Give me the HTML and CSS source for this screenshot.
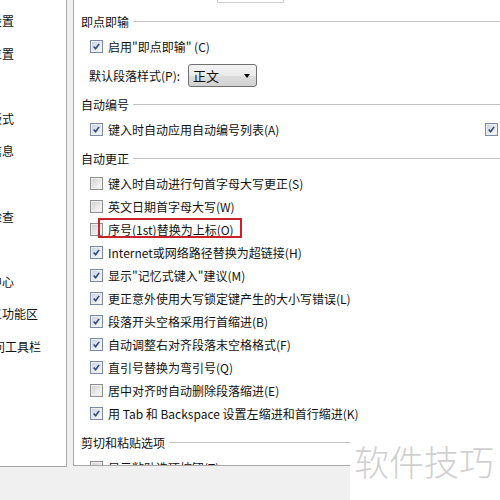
FILE: index.html
```html
<!DOCTYPE html>
<html lang="zh-CN">
<head>
  <meta charset="UTF-8" />
  <title>选项 - 编辑</title>
  <link rel="stylesheet" href="styles.css">
</head>
<body>
  <div class="window">
    <aside class="nav">
      <div class="nav-item">视图设置</div>
      <div class="nav-item">文件位置</div>
      <div class="nav-item">修订</div>
      <div class="nav-item">中文版式</div>
      <div class="nav-item">用户信息</div>
      <div class="nav-item">打印</div>
      <div class="nav-item">拼写检查</div>
      <div class="nav-item">安全</div>
      <div class="nav-item">信任中心</div>
      <div class="nav-item">自定义功能区</div>
      <div class="nav-item long">快速访问工具栏</div>
    </aside>

    <main class="panel">
      <div class="top-field"></div>

      <section class="group">
        <div class="group-title">即点即输</div>
        <label class="opt"><span class="cb on"><svg viewBox="0 0 13 13"><path d="M3.2 6.6 L5.4 9.2 L9.6 3.4"/></svg></span>启用"即点即输" (C)</label>
        <div class="opt select-row">
          默认段落样式(P):
          <div class="combo">正文<span class="arrow"></span></div>
        </div>
      </section>

      <section class="group">
        <div class="group-title">自动编号</div>
        <div class="opt-pair">
          <label class="opt"><span class="cb on"><svg viewBox="0 0 13 13"><path d="M3.2 6.6 L5.4 9.2 L9.6 3.4"/></svg></span>键入时自动应用自动编号列表(A)</label>
          <label class="opt"><span class="cb on"><svg viewBox="0 0 13 13"><path d="M3.2 6.6 L5.4 9.2 L9.6 3.4"/></svg></span>自动带圈编号(U)</label>
        </div>
      </section>

      <section class="group">
        <div class="group-title">自动更正</div>
        <label class="opt"><span class="cb"></span>键入时自动进行句首字母大写更正(S)</label>
        <label class="opt"><span class="cb"></span>英文日期首字母大写(W)</label>
        <label class="opt"><span class="cb"></span>序号(1st)替换为上标(O)<span class="highlight"></span></label>
        <label class="opt"><span class="cb on"><svg viewBox="0 0 13 13"><path d="M3.2 6.6 L5.4 9.2 L9.6 3.4"/></svg></span>Internet或网络路径替换为超链接(H)</label>
        <label class="opt"><span class="cb on"><svg viewBox="0 0 13 13"><path d="M3.2 6.6 L5.4 9.2 L9.6 3.4"/></svg></span>显示"记忆式键入"建议(M)</label>
        <label class="opt"><span class="cb on"><svg viewBox="0 0 13 13"><path d="M3.2 6.6 L5.4 9.2 L9.6 3.4"/></svg></span>更正意外使用大写锁定键产生的大小写错误(L)</label>
        <label class="opt"><span class="cb on"><svg viewBox="0 0 13 13"><path d="M3.2 6.6 L5.4 9.2 L9.6 3.4"/></svg></span>段落开头空格采用行首缩进(B)</label>
        <label class="opt"><span class="cb on"><svg viewBox="0 0 13 13"><path d="M3.2 6.6 L5.4 9.2 L9.6 3.4"/></svg></span>自动调整右对齐段落末空格格式(F)</label>
        <label class="opt"><span class="cb on"><svg viewBox="0 0 13 13"><path d="M3.2 6.6 L5.4 9.2 L9.6 3.4"/></svg></span>直引号替换为弯引号(Q)</label>
        <label class="opt"><span class="cb"></span>居中对齐时自动删除段落缩进(E)</label>
        <label class="opt"><span class="cb on"><svg viewBox="0 0 13 13"><path d="M3.2 6.6 L5.4 9.2 L9.6 3.4"/></svg></span>用 Tab 和 Backspace 设置左缩进和首行缩进(K)</label>
      </section>

      <section class="group">
        <div class="group-title">剪切和粘贴选项</div>
        <label class="opt"><span class="cb"></span>显示粘贴选项按钮(T)</label>
      </section>
    </main>

    <div class="watermark">软件技巧</div>
  </div>
</body>
</html>
```

FILE: styles.css
```css
body {
  margin: 0;
  background: #f0f0f0;
  font-family: "Noto Sans CJK SC", "Noto Sans", sans-serif;
  font-size: 12px;
  color: #111;
}

.window {
  position: relative;
  display: flex;
  gap: 6px;
  width: 500px;
  height: 500px;
  overflow: hidden;
}

/* left category list, scrolled so only the ends show */
.nav {
  flex: 0 0 67px;
  height: 467px;
  box-sizing: border-box;
  padding-top: 5px;
  background: #fff;
  border-right: 1px solid #a7a7a7;
  border-bottom: 1px solid #a7a7a7;
  overflow: hidden;
}

.nav-item {
  height: 32.6px;
  line-height: 32.6px;
  white-space: nowrap;
  text-indent: -34px;
}

.nav-item.long {
  text-indent: -43px;
}

.panel {
  flex: 1;
  height: 466px;
  box-sizing: border-box;
  padding-left: 7px;
  background: #fff;
  border-left: 1px solid #a7a7a7;
  border-bottom: 1px solid #a7a7a7;
  overflow: hidden;
}

.top-field {
  width: 65px;
  height: 2px;
  margin-left: 136px;
  border: 1px solid #cfcfcf;
  border-top: none;
}

.group {
  margin-bottom: 6px;
}

.group:first-of-type {
  margin-top: 7px;
}

.group-title {
  display: flex;
  align-items: center;
  height: 23px;
  margin-bottom: 2px;
  white-space: nowrap;
}

.group-title::after {
  content: "";
  flex: 1;
  height: 1px;
  margin-left: 4px;
  background: #c2c2c2;
}

.opt {
  position: relative;
  display: flex;
  align-items: center;
  gap: 5px;
  height: 23px;
  padding-left: 9px;
  white-space: nowrap;
}

.opt-pair {
  display: grid;
  grid-template-columns: 404px auto;
}

.opt-pair .opt + .opt {
  padding-left: 0;
}

.cb {
  flex: 0 0 auto;
  width: 11px;
  height: 11px;
  border: 1px solid #8e8f8f;
  background: linear-gradient(135deg, #cfcfcf, #f4f4f4 80%);
  box-shadow: inset 0 0 0 1px #eeeeee;
}

.cb.on {
  border-color: #7b8aa6;
  background: linear-gradient(135deg, #c9d0dd, #f2f4f8 80%);
}

.cb svg {
  display: block;
  width: 11px;
  height: 11px;
}

.cb svg path {
  fill: none;
  stroke: #34477a;
  stroke-width: 1.9;
  stroke-linejoin: round;
}

.select-row {
  margin-top: 6px;
  padding-left: 8px;
}

.combo {
  display: flex;
  align-items: center;
  justify-content: space-between;
  width: 57px;
  height: 21px;
  margin-left: 3px;
  padding: 0 6px 0 4px;
  border: 1px solid #707070;
  border-radius: 3px;
  background: linear-gradient(#f3f3f3, #ebebeb 50%, #dddddd 51%, #d2d2d2);
  font-size: 13px;
}

.arrow {
  width: 0;
  height: 0;
  border-left: 3.5px solid transparent;
  border-right: 3.5px solid transparent;
  border-top: 4px solid #000;
}

.highlight {
  position: absolute;
  left: 17px;
  top: 0;
  width: 140px;
  height: 16px;
  border: 2px solid #c8232b;
}

.watermark {
  position: absolute;
  right: 0;
  bottom: 0;
  width: 150px;
  height: 68px;
  box-sizing: border-box;
  padding-left: 4px;
  background: #fff;
  color: #d0d0d0;
  font-size: 35px;
  font-weight: 300;
  line-height: 58px;
  white-space: nowrap;
}
```
